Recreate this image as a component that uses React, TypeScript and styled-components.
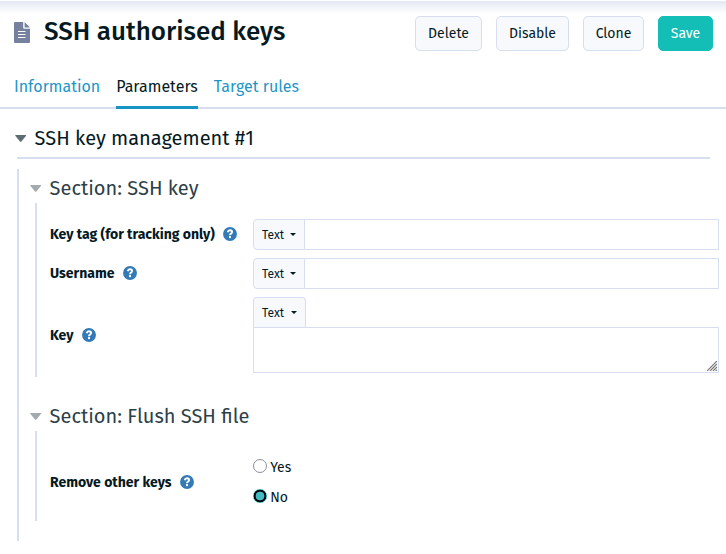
import React from 'react';
import styled, { createGlobalStyle, css } from 'styled-components';

const line = '#d6deef';
const ink = '#041922';

const GlobalStyle = createGlobalStyle`
  *, *::before, *::after { box-sizing: border-box; }
  body {
    margin: 0;
    background: #fff;
    color: ${ink};
    font-family: "Fira Sans", "Noto Sans", sans-serif;
    font-size: 14px;
    line-height: 20px;
  }
  button, input, textarea { font: inherit; color: inherit; margin: 0; }
`;

const Page = styled.div`
  height: 554px;
  overflow: hidden;
  border-top: 1px solid #fff;
`;

const Header = styled.header`
  display: flex;
  justify-content: space-between;
  align-items: flex-start;
  height: 65px;
  padding: 15px 13px 0 14px;
  background: linear-gradient(#e3e9f2, #fff) 0 0 / 100% 13px no-repeat;
`;

const Title = styled.h1`
  display: flex;
  align-items: flex-start;
  gap: 14px;
  margin: 0;
  font-size: 26px;
  font-weight: 500;
  line-height: 32px;

  svg { margin-top: 6px; flex: none; }
`;

const Actions = styled.div`
  display: flex;
  gap: 14px;
`;

const ActionButton = styled.button<{ $primary?: boolean; $width: number }>`
  width: ${p => p.$width}px;
  height: 35px;
  padding: 0;
  border: 1px solid ${p => (p.$primary ? '#13beb7' : line)};
  border-radius: 5px;
  background: ${p => (p.$primary ? '#13beb7' : '#f8f9fc')};
  color: ${p => (p.$primary ? '#fff' : ink)};
`;

const Tabs = styled.nav`
  display: flex;
  gap: 16px;
  height: 43px;
  padding-left: 14px;
  border-bottom: 2px solid ${line};
`;

const Tab = styled.a<{ $active?: boolean }>`
  height: 43px;
  padding-top: 11px;
  font-size: 16px;
  color: #1d96c6;
  ${p => p.$active && css`
    color: ${ink};
    border-bottom: 3px solid #1694c3;
  `}
`;

const Technique = styled.h2`
  display: flex;
  align-items: center;
  gap: 8px;
  height: 50px;
  margin: 0 16px 0 17px;
  padding: 10px 0 0;
  border-bottom: 2px solid ${line};
  font-size: 20px;
  font-weight: 400;

  svg { margin-left: -2.4px; }
`;

const Sections = styled.div`
  height: 372px;
  margin: 10px 7px 0 17px;
  padding-left: 16px;
  border-left: 2px solid ${line};
`;

const SectionTitle = styled.h3`
  display: flex;
  align-items: center;
  gap: 8px;
  height: 34px;
  margin: 0 0 0 -5.4px;
  padding: 4px 0 0;
  font-size: 20px;
  font-weight: 400;
  color: #2d4048;
`;

const SectionBody = styled.div<{ $height: number; $top: number }>`
  display: flex;
  flex-direction: column;
  gap: 8px;
  height: ${p => p.$height}px;
  padding: ${p => p.$top}px 0 0 13px;
  border-left: 2px solid ${line};
`;

const Section = styled.section`
  & + & { margin-top: 20px; }
`;

const Row = styled.div`
  display: grid;
  grid-template-columns: 203px 1fr;
  align-items: center;
`;

const Label = styled.div`
  display: flex;
  align-items: center;
  gap: 8.6px;
  padding-top: 1px;

  svg { margin-bottom: 1.4px; }
`;

const Strong = styled.span`
  font-weight: 700;
`;

const Group = styled.div`
  display: flex;
`;

const TypeButton = styled.button<{ $above?: boolean }>`
  display: flex;
  align-items: center;
  justify-content: space-between;
  flex: none;
  width: ${p => (p.$above ? 53 : 52)}px;
  height: ${p => (p.$above ? 30 : 31)}px;
  padding: 0 8px;
  border: 1px solid ${line};
  ${p => p.$above && 'border-bottom: 0;'}
  border-radius: ${p => (p.$above ? '4px 4px 0 0' : '4px 0 0 4px')};
  background: #f8f9fc;
  font-size: 12px;
`;

const Field = styled.input`
  flex: 1;
  min-width: 0;
  height: 31px;
  border: 1px solid ${line};
  border-left: 0;
  outline: 0;
`;

const AreaWrap = styled.div`
  position: relative;

  svg { position: absolute; right: 2px; bottom: 2px; }
`;

const Area = styled.textarea`
  display: block;
  width: 100%;
  height: 46px;
  border: 1px solid ${line};
  outline: 0;
  resize: none;
`;

const Radios = styled.div`
  display: flex;
  flex-direction: column;
  gap: 8px;
`;

const RadioLabel = styled.label`
  display: flex;
  align-items: center;
  gap: 3.2px;

  span { padding-top: 2px; }
`;

const Radio = styled.input`
  appearance: none;
  width: 14px;
  height: 14px;
  border: 1px solid #8f8f9d;
  border-radius: 50%;
  background: #fff;
  ${RadioLabel} & { margin-bottom: 2px; }
  &:checked {
    border: 0;
    background: radial-gradient(circle closest-side, #43b9c4 4.1px, #00080b 4.7px, #00080b 6.1px, #3fbac5 6.6px);
  }
`;

const FileIcon = () => (
  <svg width="16" height="21" viewBox="0 0 16 21">
    <path d="M1 0H9.2V5.6Q9.2 6.8 10.4 6.8H16V20Q16 21 15 21H1Q0 21 0 20V1Q0 0 1 0Z" fill="#75819f" />
    <path d="M10.6 0L16 5.4H10.6Z" fill="#75819f" />
    <path d="M4 9.5H11.5M4 12.5H11.5M4 15.5H11.5" stroke="#fff" strokeWidth="1" />
  </svg>
);

const Triangle = ({ color }: { color: string }) => (
  <svg width="12" height="7" viewBox="0 0 12 7">
    <path d="M.8 0H10.6Q11.7 0 10.9 1L6.4 6.5Q5.7 7.2 5 6.5L.5 1Q-.3 0 .8 0Z" fill={color} />
  </svg>
);

const Caret = () => (
  <svg width="6" height="3" viewBox="0 0 6 3">
    <path d="M0 0H6L3 3Z" fill={ink} />
  </svg>
);

const HelpIcon = () => (
  <svg width="14" height="14" viewBox="0 0 14 14">
    <circle cx="7" cy="7" r="6.95" fill="#337ab7" />
    <path d="M4.7 5.2Q5.1 3.3 7 3.3Q9.1 3.3 9.1 5.1Q9.1 6 8 6.7Q7 7.2 7 8.3" fill="none" stroke="#fff" strokeWidth="1.9" />
    <rect x="6" y="9.1" width="2" height="2" fill="#fff" />
  </svg>
);

const Grip = () => (
  <svg width="10" height="10" viewBox="0 0 10 10">
    <path d="M0 10L10 0M3 10L10 3M6 10L10 6M8.7 10L10 8.7" stroke="#777" strokeWidth="1.2" />
  </svg>
);

const FieldLabel = ({ children }: { children: string }) => (
  <Label><Strong>{children}</Strong><HelpIcon /></Label>
);

const TypeSelect = ({ above }: { above?: boolean }) => (
  <TypeButton $above={above}>Text<Caret /></TypeButton>
);

export default function App() {
  return (
    <Page>
      <GlobalStyle />
      <Header>
        <Title><FileIcon />SSH authorised keys</Title>
        <Actions>
          <ActionButton $width={67}>Delete</ActionButton>
          <ActionButton $width={73}>Disable</ActionButton>
          <ActionButton $width={61}>Clone</ActionButton>
          <ActionButton $width={55} $primary>Save</ActionButton>
        </Actions>
      </Header>
      <Tabs>
        <Tab>Information</Tab>
        <Tab $active>Parameters</Tab>
        <Tab>Target rules</Tab>
      </Tabs>
      <Technique><Triangle color="#5f6d72" />SSH key management #1</Technique>
      <Sections>
        <Section>
          <SectionTitle><Triangle color="#a3abae" />Section: SSH key</SectionTitle>
          <SectionBody $height={174} $top={16}>
            <Row>
              <FieldLabel>Key tag (for tracking only)</FieldLabel>
              <Group><TypeSelect /><Field /></Group>
            </Row>
            <Row>
              <FieldLabel>Username</FieldLabel>
              <Group><TypeSelect /><Field /></Group>
            </Row>
            <Row>
              <FieldLabel>Key</FieldLabel>
              <div>
                <TypeSelect above />
                <AreaWrap><Area /><Grip /></AreaWrap>
              </div>
            </Row>
          </SectionBody>
        </Section>
        <Section>
          <SectionTitle><Triangle color="#a3abae" />Section: Flush SSH file</SectionTitle>
          <SectionBody $height={90} $top={25}>
            <Row>
              <FieldLabel>Remove other keys</FieldLabel>
              <Radios>
                <RadioLabel><Radio type="radio" name="flush" /><span>Yes</span></RadioLabel>
                <RadioLabel><Radio type="radio" name="flush" defaultChecked /><span>No</span></RadioLabel>
              </Radios>
            </Row>
          </SectionBody>
        </Section>
      </Sections>
    </Page>
  );
}
